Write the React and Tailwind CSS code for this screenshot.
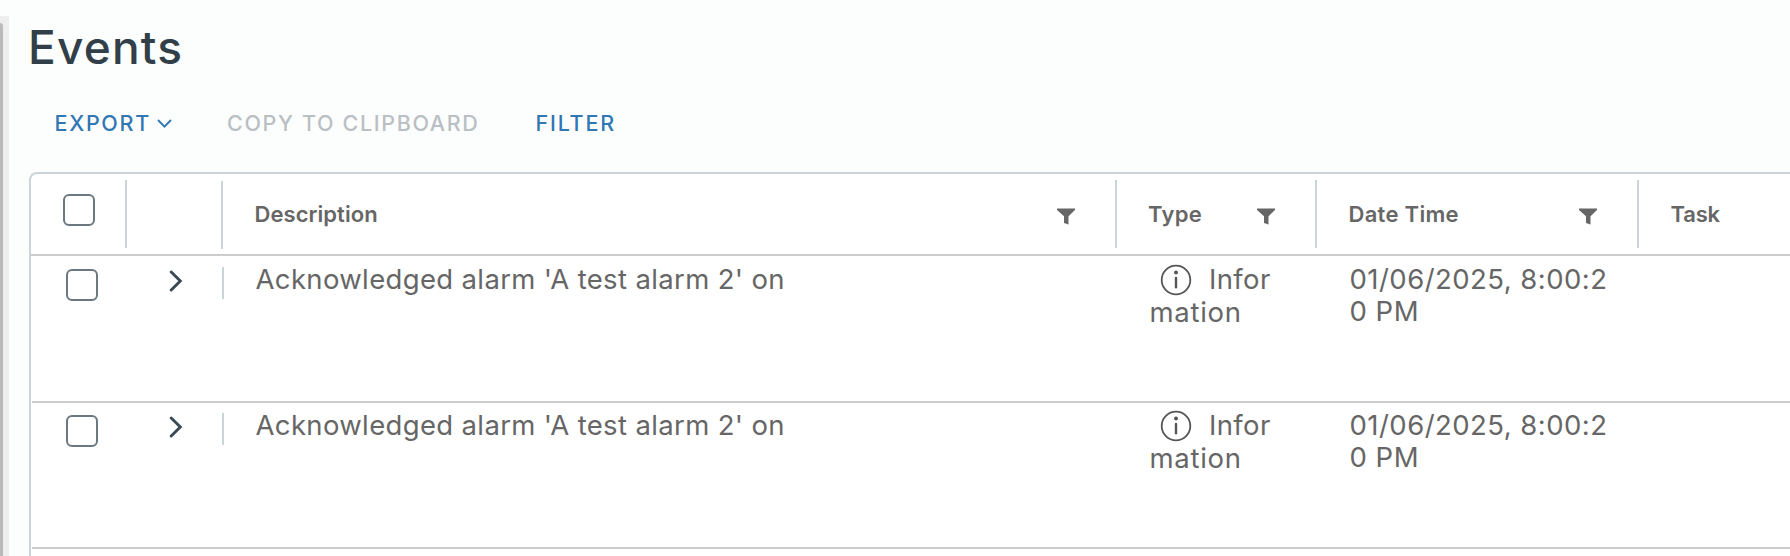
const rows = [
  { id: 1, description: "Acknowledged alarm 'A test alarm 2' on" },
  { id: 2, description: "Acknowledged alarm 'A test alarm 2' on" },
];

function Checkbox() {
  return (
    <span
      role="checkbox"
      aria-checked="false"
      className="block size-8 rounded-[6px] border-2 border-[#6a7882] bg-white"
    />
  );
}

function FilterIcon() {
  return (
    <svg width="18" height="17" viewBox="0 0 18 17" className="mt-[34px] shrink-0" fill="#666666">
      <path d="M0 0.5H18V2L11.5 8.2V16.5L7 15V8.2L0 2Z" />
    </svg>
  );
}

function InfoIcon() {
  return (
    <svg width="32" height="32" viewBox="0 0 32 32" className="mt-px shrink-0" fill="none">
      <circle cx="16" cy="16" r="14.3" stroke="#565656" strokeWidth="1.8" />
      <circle cx="16" cy="8.6" r="2" fill="#565656" />
      <path d="M16 14V23.3" stroke="#565656" strokeWidth="2.4" strokeLinecap="round" />
    </svg>
  );
}

function Separator() {
  return <span className="mt-[6px] h-[68px] w-[2px] shrink-0 bg-[#cbd4d8]" />;
}

function Row({ description }) {
  return (
    <div className="ml-px flex h-[146px] shrink-0 items-start border-b-2 border-[#cccccc] text-[27.5px] leading-8 text-[#666666]">
      <div className="w-[96px] pt-3 pl-[34px]">
        <Checkbox />
      </div>
      <div className="w-[94px] pt-[13px] pl-[41px]">
        <svg width="14" height="23" viewBox="0 0 14 23" fill="none">
          <path d="M2.2 2L11.3 11L2.2 20" stroke="#3a4a54" strokeWidth="2.9" strokeLinecap="round" strokeLinejoin="miter" />
        </svg>
      </div>
      <span className="mt-[10px] h-8 w-[2px] bg-[#cbd4d8]" />
      <div className="w-[894px] pt-[6px] pl-[31.5px] tracking-[0.35px] whitespace-nowrap">{description}</div>
      <div className="w-[201px] pt-[6px] pl-[31.5px]">
        <div className="flex h-[33px] items-start pl-[10.5px]">
          <InfoIcon />
          <span className="pl-[17px] tracking-[0.35px]">Infor</span>
        </div>
        <div className="tracking-[0.7px]">mation</div>
      </div>
      <div className="pt-[6px] pl-[30.5px] whitespace-nowrap">
        <div className="tracking-[0.46px]">01/06/2025, 8:00:2</div>
        <div className="tracking-[0.5px]">0 PM</div>
      </div>
    </div>
  );
}

export default function App() {
  return (
    <div className="flex h-[556px] w-full overflow-hidden bg-[#fcfefe] font-['Inter',sans-serif]">
      <div className="mt-4 w-[9px] shrink-0 bg-[#eeeeee] pt-[7px]">
        <div className="h-full w-[3px] rounded-tr-[4px] bg-[#bababa]" />
      </div>
      <main className="flex min-w-0 grow flex-col pl-5">
        <h1 className="mt-[23px] ml-[-1px] h-12 text-[46px] leading-[48px] font-medium tracking-[1.2px] text-[#313f49]">
          Events
        </h1>
        <div className="mt-10 flex h-6 pl-[25.5px] text-[21.5px] leading-6 font-medium text-[#3077b3]">
          <button className="flex w-[172.5px] items-start tracking-[1.68px]">
            EXPORT
            <svg width="15" height="10" viewBox="0 0 15 10" fill="none" className="mt-2 ml-[6.5px]">
              <path d="M1.5 1.5L7.5 7.7L13.5 1.5" stroke="#3077b3" strokeWidth="1.9" strokeLinecap="round" />
            </svg>
          </button>
          <button className="w-[308.5px] text-left tracking-[1.65px] text-[#b9bfc3]" disabled>
            COPY TO CLIPBOARD
          </button>
          <button className="tracking-[1.8px]">FILTER</button>
        </div>
        <div className="mt-[37px] flex grow flex-col overflow-hidden rounded-tl-[8px] border-t-2 border-l-2 border-[#cbd4d8] bg-white">
          <div className="mb-px flex h-[82px] shrink-0 items-start border-b-2 border-[#cccccc] text-[22px] leading-7 font-semibold text-[#666666]">
            <div className="w-[94px] pt-5 pl-8">
              <Checkbox />
            </div>
            <Separator />
            <div className="w-[94px]" />
            <span className="mt-[7px] h-[68px] w-[2px] bg-[#cbd4d8]" />
            <div className="flex w-[892px] justify-between pr-10 pl-[31.5px]">
              <span className="pt-[26px] tracking-[0.05px]">Description</span>
              <FilterIcon />
            </div>
            <Separator />
            <div className="flex w-[198px] justify-between pr-10 pl-[31px]">
              <span className="pt-[26px] tracking-[0.35px]">Type</span>
              <FilterIcon />
            </div>
            <Separator />
            <div className="flex w-[320px] justify-between pr-10 pl-[31.5px]">
              <span className="pt-[26px] tracking-[0.3px]">Date Time</span>
              <FilterIcon />
            </div>
            <Separator />
            <span className="pt-[26px] pl-[31.5px] tracking-[-0.2px]">Task</span>
          </div>
          {rows.map((row) => (
            <Row key={row.id} description={row.description} />
          ))}
        </div>
      </main>
    </div>
  );
}
